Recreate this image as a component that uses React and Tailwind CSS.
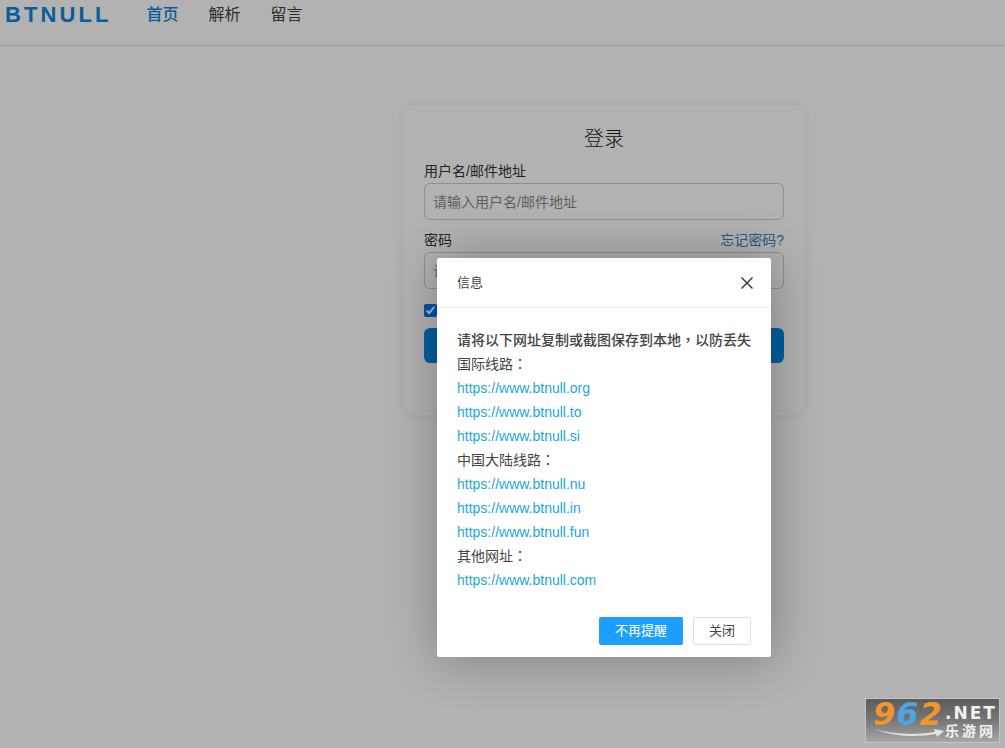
// Login page behind a dimmed "backup addresses" dialog.
const FONT = "font-['Liberation_Sans','Noto_Sans_CJK_SC',sans-serif]";
// Traditional-style CJK fonts centre full-width punctuation, as the page does.
const PUNCT = "font-['Noto_Sans_CJK_TC',sans-serif] leading-none";

const NAV = [
  { label: "首页", active: true },
  { label: "解析" },
  { label: "留言" },
];

const LINES = [
  { text: "国际线路" },
  { href: "https://www.btnull.org" },
  { href: "https://www.btnull.to" },
  { href: "https://www.btnull.si" },
  { text: "中国大陆线路" },
  { href: "https://www.btnull.nu" },
  { href: "https://www.btnull.in" },
  { href: "https://www.btnull.fun" },
  { text: "其他网址" },
  { href: "https://www.btnull.com" },
];

function Header() {
  return (
    <header className="flex h-[46px] items-start border-b border-[#dddddd] bg-white">
      <div className="ml-[5px] mt-[2px] text-[22px] leading-[26px] font-bold tracking-[3.1px] text-[#0f86d8]">
        BTNULL
      </div>
      <nav className="ml-[27px] mt-px flex gap-[14px] text-[16px] leading-[28px] text-[#444444]">
        {NAV.map((n) => (
          <a
            key={n.label}
            className={`w-[48px] text-center ${n.active ? "font-medium text-[#0f86d8]" : ""}`}
          >
            {n.label}
          </a>
        ))}
      </nav>
    </header>
  );
}

function LoginCard() {
  return (
    <div className="ml-[404px] mt-[59px] h-[310px] w-[400px] rounded-[10px] bg-white px-5 pt-[21px] shadow-[0_0_10px_rgba(0,0,0,0.08)]">
      <h1 className="text-center text-[20px] leading-[26px] font-light text-[#222222]">登录</h1>
      <label className="mt-[9px] block text-[14px] leading-[21px] text-[#333333]">用户名/邮件地址</label>
      <input
        placeholder="请输入用户名/邮件地址"
        className="mt-px block h-[37px] w-full rounded-md border border-[#cccccc] px-2 text-[14px] outline-none placeholder:text-[#888888]"
      />
      <div className="mt-[9px] flex justify-between text-[14px] leading-[22px] text-[#333333]">
        <span>密码</span>
        <a className="text-[#3f7cc0]">忘记密码?</a>
      </div>
      <input
        placeholder="请输入密码"
        className="mt-px block h-[37px] w-full rounded-md border border-[#cccccc] px-2 text-[14px] outline-none placeholder:text-[#888888]"
      />
      <input type="checkbox" defaultChecked className="mt-[15px] block h-[13px] w-[13px]" />
      <button className="mt-[11px] block h-[35px] w-full rounded-md bg-[#0089e5] text-[14px] text-white">
        登录
      </button>
    </div>
  );
}

function Dialog() {
  return (
    <div className="absolute left-[437px] top-[258px] w-[334px] rounded-[2px] bg-white shadow-[1px_1px_50px_rgba(0,0,0,0.3)]">
      <div className="flex h-[50px] items-center justify-between border-b border-[#f0f0f0] pl-5 pr-[18px] text-[13px] text-[#444444]">
        <span>信息</span>
        <svg width="12" height="12" viewBox="0 0 12 12" stroke="#2f2f2f" strokeWidth="1.4" fill="none" aria-hidden="true">
          <path d="M0.5 0.5 L11.5 11.5 M11.5 0.5 L0.5 11.5" />
        </svg>
      </div>
      <div className="px-5 pt-5 text-[14px] leading-[24px] text-[#444444]">
        <div className="h-[24px] font-medium whitespace-nowrap">
          请将以下网址复制或截图保存到本地<span className={PUNCT}>，</span>以防丢失
        </div>
        {LINES.map((l) =>
          l.href ? (
            <a key={l.href} className="block text-[#1aa6dc]">{l.href}</a>
          ) : (
            <div key={l.text} className="h-[24px]">
              {l.text}<span className={PUNCT}>：</span>
            </div>
          ),
        )}
      </div>
      <div className="flex justify-end gap-[10px] px-5 pb-3 pt-[25px] text-[13px]">
        <button className="h-[28px] w-[84px] rounded-[2px] bg-[#1e9fff] text-white">不再提醒</button>
        <button className="h-[28px] w-[58px] rounded-[2px] border border-[#dedede] bg-white text-[#444444]">关闭</button>
      </div>
    </div>
  );
}

// Site watermark in the bottom right corner of the capture.
function Watermark() {
  return (
    <div className="absolute left-[865px] top-[698px] flex h-[45px] w-[135px] border border-[#c4c4c4] bg-gradient-to-b from-[#5c5c5c] via-[#777777] to-[#a8a8a8] pl-[7px] font-['DejaVu_Sans','Noto_Sans_CJK_SC',sans-serif]">
      <div className="relative w-[72px]">
        <div className="text-[32px] leading-[30px] font-bold italic tracking-[1px] whitespace-nowrap">
          <span className="text-[#f0962a]">9</span>
          <span className="text-[#4ea5e0]">6</span>
          <span className="text-[#f0962a]">2</span>
        </div>
        <svg className="absolute left-0 top-[27px]" width="72" height="14" viewBox="0 0 72 14" fill="#e4e4e4" aria-hidden="true">
          <path d="M1 3 Q30 11 62 6 L61 3 L71 5 L64 11 L63 8 Q30 14 1 3 Z" />
        </svg>
      </div>
      <div className="flex flex-col whitespace-nowrap text-[#f0f0f0]">
        <span className="mt-[5px] text-[17px] leading-[18px] font-bold tracking-[2px]">.NET</span>
        <span className="mt-px text-[14px] leading-[17px] font-bold tracking-[3px]">乐游网</span>
      </div>
    </div>
  );
}

export default function App() {
  return (
    <div className={`relative h-[748px] w-full overflow-hidden bg-white ${FONT}`}>
      <Header />
      <LoginCard />
      <div className="absolute inset-0 bg-black/30" />
      <Dialog />
      <Watermark />
    </div>
  );
}
